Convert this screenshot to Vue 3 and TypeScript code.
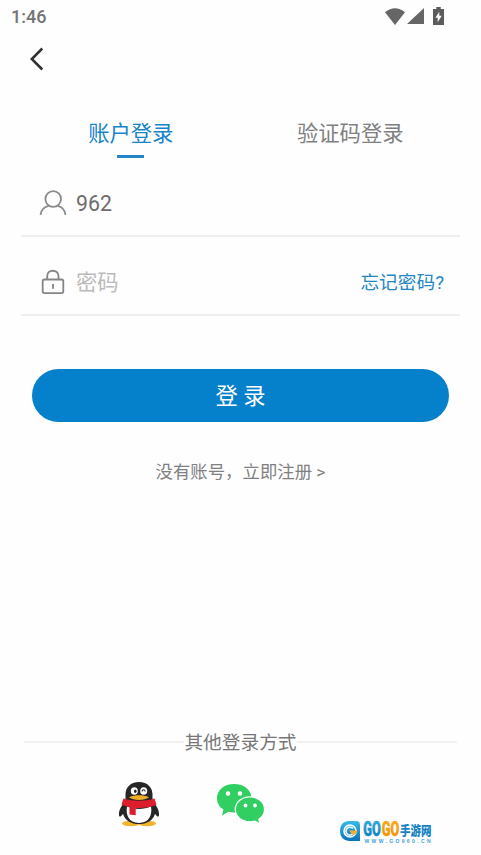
<template>
  <div class="login-page">
    <header class="status-bar">
      <span class="time">1:46</span>
      <div class="status-icons">
        <svg class="wifi" width="20" height="17" viewBox="0 0 20 17">
          <path d="M0 4.200Q10-3.800 20 4.200L10 17Z" fill="#666" />
        </svg>
        <svg class="signal" width="17" height="16" viewBox="0 0 17 16">
          <path d="M17 0V16H0Z" fill="#666" />
        </svg>
        <svg class="battery" width="11" height="18" viewBox="0 0 11 18">
          <path d="M3.300 0h4.400v2H11v16H0V2h3.300Z" fill="#5c5c5c" />
          <path d="M6.300 4.700 2.400 10.800h2.300v4.500l4-6.500H6.300Z" fill="#fff" />
        </svg>
      </div>
    </header>

    <nav class="nav-bar">
      <button class="back" type="button" aria-label="返回">
        <svg width="14" height="24" viewBox="0 0 14 24">
          <path d="M12.300 1.500 1.800 12l10.500 10.500" fill="none" stroke="#303030" stroke-width="2.500" />
        </svg>
      </button>
    </nav>

    <div class="tabs">
      <button
        v-for="tab in tabs"
        :key="tab.key"
        type="button"
        class="tab"
        :class="{ active: tab.key === activeTab }"
        @click="activeTab = tab.key"
      >
        {{ tab.label }}
      </button>
    </div>

    <form class="form" @submit.prevent>
      <label class="field">
        <svg class="field-icon" width="28" height="28" viewBox="0 0 28 28">
          <g fill="none" stroke="#8a8a8a" stroke-width="1.800">
            <circle cx="14.200" cy="10" r="7.800" />
            <path d="M1.500 25.800c.6-4.800 4-8 8.300-9M26.500 25.800c-.5-4.800-3.800-8-8-9" />
          </g>
        </svg>
        <input v-model="account" type="text" />
      </label>
      <div class="field">
        <svg class="field-icon" width="28" height="28" viewBox="0 0 28 28">
          <g fill="none" stroke="#858585" stroke-width="1.800">
            <rect x="3.700" y="11.500" width="20.600" height="13.600" rx="1.800" />
            <path d="M8.200 11.500V8c0-7 11.300-7 11.300 0v3.500M14 16v4.800" />
          </g>
        </svg>
        <input v-model="password" type="password" placeholder="密码" />
        <a class="forgot">忘记密码?</a>
      </div>
      <button class="submit" type="submit">登 录</button>
    </form>

    <a class="register">没有账号，立即注册 &gt;</a>

    <section class="others">
      <div class="divider"><span>其他登录方式</span></div>
      <div class="providers">
        <svg class="qq" width="42" height="46" viewBox="0 0 42 46">
          <ellipse cx="13" cy="42.500" rx="9" ry="2.700" fill="#f0b52c" />
          <ellipse cx="29" cy="42.500" rx="9" ry="2.700" fill="#f0b52c" />
          <path d="M21 1C12.500 1 7.500 6.500 7.500 13.500v6.800C3.500 24.500.5 29.500 1 34.200c.3 2.600 2.200 1.300 4-1.500C7 39.500 13 43 21 43s14-3.500 16-10.300c1.800 2.800 3.700 4.100 4 1.500.5-4.700-2.500-9.700-6.500-13.900v-6.800C34.500 6.500 29.500 1 21 1Z" fill="#262626" />
          <path d="M9 25.500c7 3.300 17 3.300 24 0 1.500 8-1.700 16.500-12 16.500S7.500 33.500 9 25.500Z" fill="#fff" />
          <path d="M5.500 17.500C15 20.500 27 20.500 36.500 17.500l2 6.300c-6 2.700-13.500 3.600-20.800 3.200v7.200l-6.200-.8v-7.500c-3-.5-5.500-1.200-8-2.300Z" fill="#dc1e2d" />
          <ellipse cx="16.300" cy="10" rx="3.500" ry="3.800" fill="#fff" />
          <ellipse cx="25.700" cy="10" rx="3.500" ry="3.800" fill="#fff" />
          <ellipse cx="17.300" cy="10.200" rx="1.300" ry="1.800" fill="#222" />
          <path d="M24 10.500c.3-2.300 2.900-2.300 3.200 0" fill="none" stroke="#222" stroke-width="1.100" />
          <path d="M11 16.200c6-2.600 14-2.600 20 0-5 3.600-15 3.600-20 0Z" fill="#efae28" />
        </svg>
        <svg class="wechat" width="50" height="42" viewBox="0 0 50 42">
          <path d="M18 1C8 1 1 7 1 15.300c0 4.900 2.400 8.800 6.500 11.300L6 32.500l6.300-3.700c1.800.5 3.700.8 5.700.8 10 0 17.500-6 17.500-14.300S28 1 18 1Z" fill="#31cf62" />
          <path d="M34 13.800c-8.500 0-14.700 5.500-14.700 12.500S25.500 38.800 34 38.800c1.700 0 3.300-.2 4.800-.7l5.400 3-1.400-4.900c3.700-2.300 5.800-5.700 5.800-9.900 0-7-6.100-12.500-14.600-12.500Z" fill="#31cf62" stroke="#fff" stroke-width="1.300" />
          <g fill="#fff">
            <circle cx="12" cy="10.500" r="2.300" />
            <circle cx="24" cy="10.500" r="2.300" />
            <circle cx="29.500" cy="22.500" r="1.900" />
            <circle cx="39" cy="22.500" r="1.900" />
          </g>
        </svg>
      </div>
    </section>

    <div class="watermark">
      <svg width="96" height="34" viewBox="0 -6 96 34">
        <defs>
          <linearGradient id="blue" x2="0" y2="1">
            <stop offset="0" stop-color="#38bce9" />
            <stop offset="1" stop-color="#0872b8" />
          </linearGradient>
          <linearGradient id="orange" x2="0" y2="1">
            <stop offset="0" stop-color="#ffb51f" />
            <stop offset="1" stop-color="#f28a00" />
          </linearGradient>
        </defs>
        <path d="M9 1h8q4 0 4 4v16H10Q1 20 1 11T9 1Z" fill="url(#blue)" />
        <circle cx="11" cy="11" r="6" fill="none" stroke="#fff" stroke-width="1.600" />
        <path d="M14 8.500A4 4 0 1 0 14.500 13" fill="none" stroke="#e4f7ff" stroke-width="1.700" />
        <path d="M10 10.500h8.500l-2 4h-3.300Z" fill="#f6ad32" />
        <g class="brand">
          <text x="24.300" y="16" textLength="17.500" lengthAdjust="spacingAndGlyphs" fill="url(#blue)" stroke="#198ccb">GO</text>
          <text x="42.800" y="16" textLength="17.500" lengthAdjust="spacingAndGlyphs" fill="url(#orange)" stroke="#f59b0b">GO</text>
        </g>
        <text class="brand-cn" x="61" y="15" textLength="31.500" lengthAdjust="spacingAndGlyphs">手游网</text>
        <text class="site" x="25.500" y="23" textLength="66">WWW.GO960.CN</text>
      </svg>
    </div>
  </div>
</template>

<script setup lang="ts">
import { ref } from 'vue'

type TabKey = 'account' | 'code'

interface Tab {
  key: TabKey
  label: string
}

const tabs: Tab[] = [
  { key: 'account', label: '账户登录' },
  { key: 'code', label: '验证码登录' }
]

const activeTab = ref<TabKey>('account')
const account = ref('962')
const password = ref('')
</script>

<style>
body {
  margin: 0;
  background: #fefefe;
}
</style>

<style scoped>
.login-page {
  position: relative;
  display: flex;
  flex-direction: column;
  width: 100%;
  height: 100vh;
  overflow: hidden;
  background: #fefefe;
  font-family: Roboto, 'Noto Sans CJK SC', sans-serif;
  color: #777;
}

button,
input {
  padding: 0;
  border: 0;
  background: none;
  font-family: inherit;
  color: inherit;
}

svg {
  display: block;
  flex: none;
  overflow: visible;
}

.status-bar {
  display: flex;
  justify-content: space-between;
  align-items: center;
  height: 34px;
  padding: 0 37px 2px 11px;
  box-sizing: border-box;
}

.time {
  font-size: 18px;
  font-weight: 500;
  color: #757575;
}

.status-icons {
  display: flex;
  align-items: center;
}

.signal {
  margin: 0 9px 0 2px;
}

.nav-bar {
  display: flex;
  align-items: center;
  height: 50px;
  padding-left: 30px;
}

.tabs {
  display: flex;
  height: 53px;
  margin: 26px 21px 0;
}

.tab {
  display: flex;
  flex: 1;
  flex-direction: column;
  align-items: center;
  padding-top: 8px;
  font-size: 21.3px;
  line-height: 32px;
  color: #808080;
}

.tab.active {
  color: #1784c7;
}

.tab.active::after {
  content: '';
  width: 27px;
  height: 3px;
  margin-top: 5px;
  background: #2585c7;
}

.form {
  display: flex;
  flex-direction: column;
}

.field {
  display: flex;
  align-items: center;
  height: 79px;
  margin: 0 21px;
  padding: 13px 16px 0 18px;
  box-sizing: border-box;
  border-bottom: 2px solid #efefef;
}

.field:first-child {
  height: 74px;
  padding-top: 8px;
}

.field input {
  flex: 1;
  min-width: 0;
  height: 32px;
  margin-left: 9px;
  outline: none;
  font-size: 21.3px;
  color: #6c6c6c;
}

.field input::placeholder {
  color: #bbb;
}

.forgot {
  padding-top: 2px;
  font-size: 18.7px;
  line-height: 28px;
  color: #2586c2;
}

.submit {
  height: 53px;
  margin: 53px 32px 0;
  padding-bottom: 4px;
  border-radius: 27px;
  background: #0581cc;
  font-size: 22.3px;
  color: #fff;
}

.register {
  margin-top: 36px;
  text-align: center;
  font-size: 17.4px;
  line-height: 28px;
  color: #808080;
}

.others {
  margin-top: auto;
  padding: 0 24px 28px;
}

.divider {
  display: flex;
  align-items: center;
  height: 28px;
  font-size: 18.7px;
  line-height: 28px;
  color: #777;
}

.divider span {
  padding-top: 2px;
}

.divider::before,
.divider::after {
  content: '';
  flex: 1;
  height: 2px;
  background: #f1f1f1;
}

.providers {
  display: flex;
  align-items: center;
  gap: 56px;
  height: 46px;
  margin-top: 25px;
  padding-left: 94px;
}

.watermark {
  position: absolute;
  right: 46px;
  bottom: 7px;
}

.brand {
  font-family: Roboto, sans-serif;
  font-size: 20px;
  font-weight: 900;
  stroke-width: 0.5px;
}

.brand-cn {
  font-family: 'Noto Sans CJK SC', sans-serif;
  font-size: 13px;
  font-weight: 900;
  fill: #1682c3;
}

.site {
  font-family: 'Liberation Sans', sans-serif;
  font-size: 5px;
  font-weight: 700;
  fill: #3da1d8;
}
</style>
